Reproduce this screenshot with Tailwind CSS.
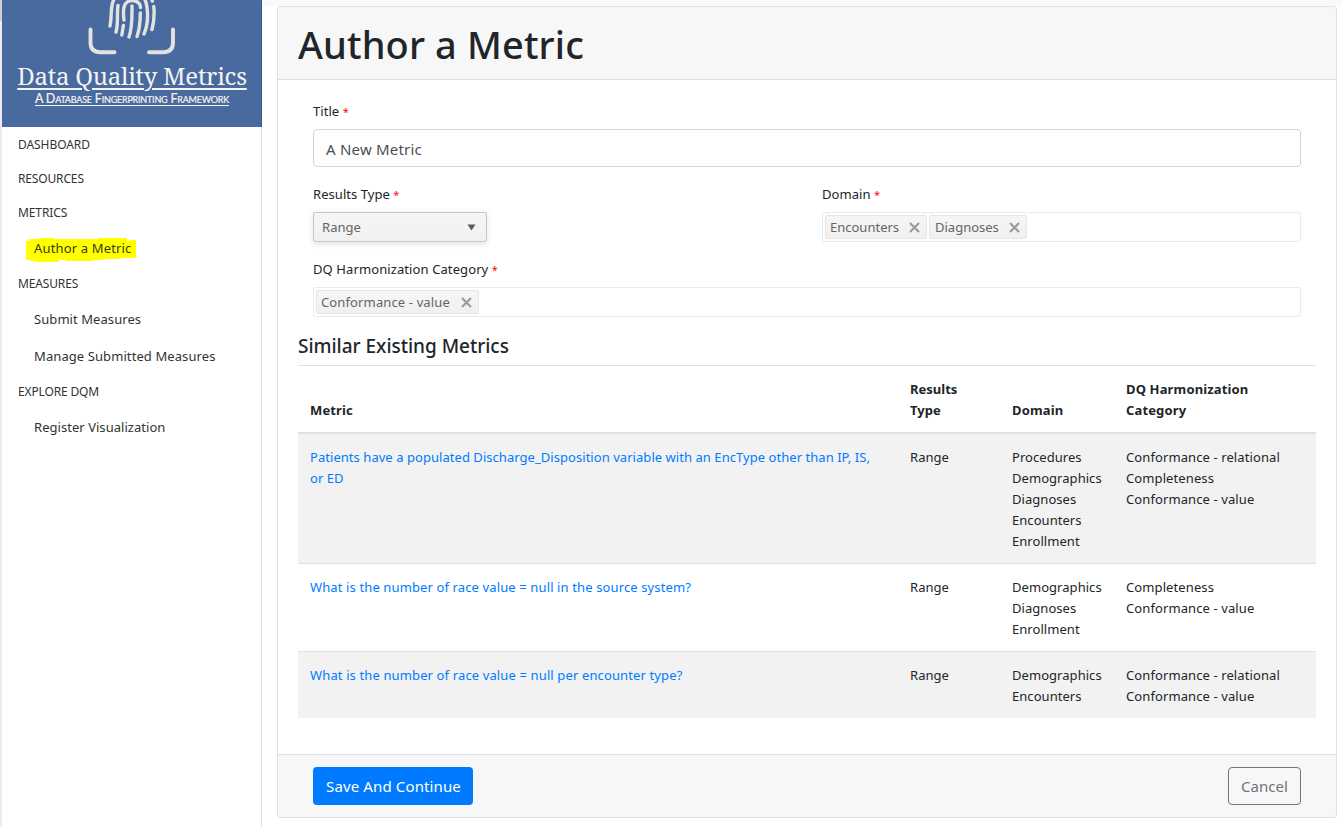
<!DOCTYPE html>
<html lang="en">
<head>
<meta charset="utf-8">
<title>Author a Metric</title>
<script src="https://cdn.jsdelivr.net/npm/@tailwindcss/browser@4"></script>
</head>
<body class="flex h-[827px] overflow-hidden bg-white font-['Noto_Sans','Open_Sans',sans-serif] text-[13px] leading-[21px] tracking-[0.05px] text-[#212529]">
  <div class="w-[2px] shrink-0 bg-[#ebebf1]"><div class="h-[21px] bg-[#cfd0d6]"></div></div>
  <aside class="w-[260px] shrink-0 border-r border-[#e0e0e2]">
    <a class="-mr-px flex h-[127px] flex-col items-center border-r border-[#3c5a88] bg-[#486a9e] text-[#f4f4f4]">
      <svg class="ml-[2px] h-[60px] w-[115px] shrink-0" viewBox="0 0 115 60" fill="none" stroke="#e2e2e2" stroke-width="3.4" stroke-linecap="round">
        <path stroke-width="3.9" d="M15.500 29.500V42.500Q15.500 52.300 25.500 52.300H39.500M74 52.300H88Q98 52.300 98 42.500V29.500"/>
        <path d="M35 26C36.800 18 35.500 11 37.500 3L39 -1M41 32C43.500 23 41.700 14 43 5.500M46.800 35L48.400 25.500M49 20C48 12 48 8 50 4.500C53 -0.500 61 -1 64.500 4C65.300 5.300 65.500 6 65.500 7.500M54 37C57.500 27 57 17 57 6M62 36.500C65 28 65.300 21 65.300 13M69 34C73 25 73 14 71.800 6C71.200 3 70.400 0 69 -2M77 29.500C79.300 21 79.500 14 78.800 6.500M77.300 1L76.500 -2"/>
      </svg>
      <span class="-mt-0.5 pl-px font-['Noto_Serif','Liberation_Serif',serif] text-[24px] leading-[36px] tracking-[-0.25px] underline decoration-2 underline-offset-[3px]">Data Quality Metrics</span>
      <span class="-mt-[3px] pl-px font-['Lato',sans-serif] text-[12.500px] leading-[16px] tracking-[-0.21px] underline decoration-1 underline-offset-2 [-webkit-text-stroke:0.2px_#f4f4f4] [font-variant-caps:small-caps]">A Database Fingerprinting Framework</span>
    </a>
    <nav class="flex flex-col pl-4 text-[#333]">
      <a class="flex h-[34px] items-center text-[12px] tracking-[-0.06px]">DASHBOARD</a>
      <a class="flex h-[34px] items-center text-[12px] tracking-[-0.15px]">RESOURCES</a>
      <a class="flex h-[34px] items-center text-[12px] tracking-[-0.1px]">METRICS</a>
      <a class="relative flex h-[38px] items-center pl-4 tracking-[0.15px]">
        <svg class="absolute top-[9px] left-2 h-[24px] w-[110px]" viewBox="0 0 110 24"><path fill="#ff0" d="M0 3H3V1H13V0H28V1H72V0H78V-1H97V0H101V3H103V2H110V20H95V21H77V22H67V23H40V22H33V24H10V23H4V22H0Z"/></svg>
        <span class="relative text-[#3a3a10]">Author a Metric</span>
      </a>
      <a class="flex h-8 items-center text-[12px] tracking-[-0.15px]">MEASURES</a>
      <a class="flex h-10 items-center pl-4 tracking-[0.07px]">Submit Measures</a>
      <a class="flex h-[34px] items-center pl-4 tracking-[0.09px]">Manage Submitted Measures</a>
      <a class="flex h-9 items-center text-[12px] tracking-[-0.15px]">EXPLORE DQM</a>
      <a class="flex h-9 items-center pl-4 tracking-[0.04px]">Register Visualization</a>
    </nav>
  </aside>

  <main class="grow">
    <div class="h-[6px] bg-[#f8f9fb]"></div>
    <section class="ml-[15px] flex h-[812px] w-[1060px] flex-col overflow-hidden rounded-[4px] border border-[#dfdfdf]">
      <header class="flex h-[73px] shrink-0 items-center border-b border-[#dfdfdf] bg-[#f7f7f7] px-5">
        <h1 class="pt-px text-[38px] leading-[48px] font-medium tracking-[0.12px]">Author a Metric</h1>
      </header>

      <div class="grow px-5">
        <form class="px-[15px] pt-[21px]">
          <label class="block">Title <span class="text-[11px] text-[#f00]">*</span></label>
          <div class="mt-[7px] flex h-[38px] items-center rounded-[4px] border border-[#ced4da] px-3 pt-[2px] text-[15px] tracking-[0.21px] text-[#495057]">A New Metric</div>
          <div class="mt-[17px] flex">
            <div class="w-[509px]">
              <label class="block">Results Type <span class="text-[11px] text-[#f00]">*</span></label>
              <div class="mt-[7px] flex h-[30px] w-[174px] items-center justify-between rounded-[2px] border border-[#c8c8c8] bg-linear-to-b from-[#f6f6f6] to-[#f0f0f0] pr-[10px] pl-2 text-[#656565] shadow-[0_2px_6px_rgba(0,0,0,0.12)]">
                <span>Range</span>
                <svg class="h-[7px] w-[9px]" viewBox="0 0 9 7"><path fill="#595959" d="M0.500 0.500H8.500L4.500 6.500Z"/></svg>
              </div>
            </div>
            <div class="grow">
              <label class="block">Domain <span class="text-[11px] text-[#f00]">*</span></label>
              <div class="mt-[7px] flex h-[30px] gap-[2px] rounded-[2px] border border-[#ebebeb] p-[2px] text-[#656565]">
                <span class="flex h-6 w-[102px] items-center justify-between rounded-[2px] border border-[#e6e6e6] bg-linear-to-b from-[#f6f6f6] to-[#f0f0f0] pr-[6px] pl-1 tracking-normal">Encounters
                  <svg class="h-[11px] w-[11px]" viewBox="0 0 11 11" stroke="#9b9b9b" stroke-width="2.2"><path d="M1 1L10 10M10 1L1 10"/></svg></span>
                <span class="flex h-6 w-[98px] items-center justify-between rounded-[2px] border border-[#e6e6e6] bg-linear-to-b from-[#f6f6f6] to-[#f0f0f0] pr-[6px] pl-[5px] tracking-normal">Diagnoses
                  <svg class="h-[11px] w-[11px]" viewBox="0 0 11 11" stroke="#9b9b9b" stroke-width="2.2"><path d="M1 1L10 10M10 1L1 10"/></svg></span>
              </div>
            </div>
          </div>
          <label class="mt-[17px] block tracking-[0.1px]">DQ Harmonization Category <span class="text-[11px] text-[#f00]">*</span></label>
          <div class="mt-[7px] flex h-[30px] rounded-[2px] border border-[#ebebeb] p-[2px] text-[#656565]">
            <span class="flex h-6 w-[163px] items-center justify-between rounded-[2px] border border-[#e6e6e6] bg-linear-to-b from-[#f6f6f6] to-[#f0f0f0] pr-[6px] pl-1 tracking-[0.13px]">Conformance - value
              <svg class="h-[11px] w-[11px]" viewBox="0 0 11 11" stroke="#9b9b9b" stroke-width="2.2"><path d="M1 1L10 10M10 1L1 10"/></svg></span>
          </div>
        </form>

        <h2 class="mt-[17px] h-[31px] text-[19px] leading-6 font-medium tracking-[-0.02px]">Similar Existing Metrics</h2>
        <table class="w-[1018px] table-fixed border-separate border-spacing-0 text-left">
          <colgroup><col class="w-[600px]"><col class="w-[102px]"><col class="w-[114px]"><col class="w-[202px]"></colgroup>
          <thead>
            <tr class="align-bottom tracking-[0.14px] *:border-t *:border-b-2 *:border-[#dee2e6] *:px-3 *:pt-[13px] *:pb-[11px] *:font-bold">
              <th>Metric</th><th class="tracking-normal">Results<br>Type</th><th>Domain</th><th>DQ Harmonization<br>Category</th>
            </tr>
          </thead>
          <tbody class="align-top">
            <tr class="bg-[#f2f2f2] *:px-3 *:pt-[13px] *:pb-[11px]">
              <td class="tracking-[0.047px] text-[#007bff]">Patients have a populated Discharge_Disposition variable with an EncType other than IP, IS,<br>or ED</td>
              <td>Range</td>
              <td>Procedures<br>Demographics<br>Diagnoses<br>Encounters<br>Enrollment</td>
              <td class="tracking-[0.1px]">Conformance - relational<br>Completeness<br>Conformance - value</td>
            </tr>
            <tr class="*:border-t *:border-[#dee2e6] *:px-3 *:pt-[13px] *:pb-[11px]">
              <td class="tracking-[0.122px] text-[#007bff]">What is the number of race value = null in the source system?</td>
              <td>Range</td>
              <td>Demographics<br>Diagnoses<br>Enrollment</td>
              <td class="tracking-[0.1px]">Completeness<br>Conformance - value</td>
            </tr>
            <tr class="bg-[#f2f2f2] *:border-t *:border-[#dee2e6] *:px-3 *:pt-[13px] *:pb-[11px]">
              <td class="tracking-[0.128px] text-[#007bff]">What is the number of race value = null per encounter type?</td>
              <td>Range</td>
              <td>Demographics<br>Encounters</td>
              <td class="tracking-[0.1px]">Conformance - relational<br>Conformance - value</td>
            </tr>
          </tbody>
        </table>
      </div>

      <footer class="flex h-[63px] shrink-0 items-center justify-between border-t border-[#dfdfdf] bg-[#f7f7f7] px-[35px] text-[15px]">
        <button class="h-[38px] w-[160px] rounded-[4px] bg-[#007bff] pl-px tracking-[0.13px] text-white">Save And Continue</button>
        <button class="h-[38px] w-[73px] rounded-[4px] border border-[#6c757d] text-[#6c757d]">Cancel</button>
      </footer>
    </section>
  </main>
</body>
</html>
